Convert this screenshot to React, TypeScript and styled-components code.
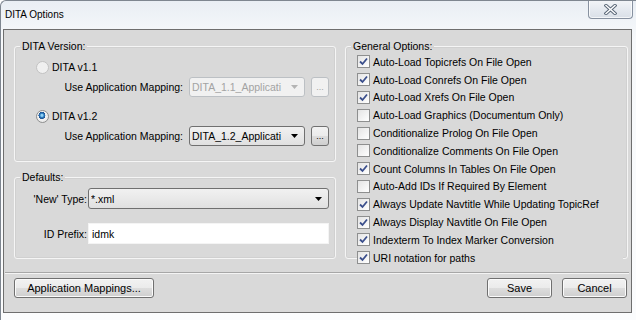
import styled, { createGlobalStyle } from 'styled-components';

const GlobalStyle = createGlobalStyle`
  html, body {
    margin: 0;
    padding: 0;
    background: #ffffff;
  }
  body {
    font-family: "Liberation Sans", Arial, sans-serif;
    font-size: 10.5px;
    color: #000;
  }
`;

const options = [
  { label: 'Auto-Load Topicrefs On File Open', checked: true },
  { label: 'Auto-Load Conrefs On File Open', checked: true },
  { label: 'Auto-Load Xrefs On File Open', checked: true },
  { label: 'Auto-Load Graphics (Documentum Only)', checked: false },
  { label: 'Conditionalize Prolog On File Open', checked: false },
  { label: 'Conditionalize Comments On File Open', checked: false },
  { label: 'Count Columns In Tables On File Open', checked: true },
  { label: 'Auto-Add IDs If Required By Element', checked: false },
  { label: 'Always Update Navtitle While Updating TopicRef', checked: true },
  { label: 'Always Display Navtitle On File Open', checked: true },
  { label: 'Indexterm To Index Marker Conversion', checked: true },
  { label: 'URI notation for paths', checked: true },
];

const Arrow = ({ disabled }: { disabled?: boolean }) => (
  <svg width="7" height="4" viewBox="0 0 7 4">
    <polygon points="0,0 7,0 3.5,4" fill={disabled ? '#b4b4b4' : '#000'} />
  </svg>
);

const CheckMark = () => (
  <svg width="11" height="11" viewBox="0 0 11 11">
    <polyline points="2,5.5 4.5,8 9,2.5" fill="none" stroke="#3b4f8c" strokeWidth="1.8" />
  </svg>
);

const CloseGlyph = () => (
  <svg width="13" height="11" viewBox="0 0 13 11">
    <path d="M2 1.5 L11 9.5 M11 1.5 L2 9.5" stroke="#5d6a7a" strokeWidth="3.4" strokeLinecap="square" />
    <path d="M2 1.5 L11 9.5 M11 1.5 L2 9.5" stroke="#ffffff" strokeWidth="1.4" strokeLinecap="square" />
  </svg>
);

const App = () => {
  return (
    <>
      <GlobalStyle />
      <Window>
        <TitleBar>
          <Title>DITA Options</Title>
          <CloseButton>
            <CloseGlyph />
          </CloseButton>
        </TitleBar>

        <Client>
          <Main>
            <LeftColumn>
              <VersionGroup>
                <Legend>DITA Version:</Legend>
                <VersionBody>
                  <RadioRow>
                    <Radio $disabled />
                    <span>DITA v1.1</span>
                  </RadioRow>
                  <MappingRow>
                    <span>Use Application Mapping:</span>
                    <Combo $disabled $width={116} $height={20}>
                      <ComboText>DITA_1.1_Applicati</ComboText>
                      <Arrow disabled />
                    </Combo>
                    <DotsButton $disabled>...</DotsButton>
                  </MappingRow>
                  <RadioRow $gap={9}>
                    <Radio $checked />
                    <span>DITA v1.2</span>
                  </RadioRow>
                  <MappingRow>
                    <span>Use Application Mapping:</span>
                    <Combo $width={116} $height={20}>
                      <ComboText>DITA_1.2_Applicati</ComboText>
                      <Arrow />
                    </Combo>
                    <DotsButton>...</DotsButton>
                  </MappingRow>
                </VersionBody>
              </VersionGroup>

              <DefaultsGroup>
                <Legend>Defaults:</Legend>
                <FieldGrid>
                  <FieldLabel>'New' Type:</FieldLabel>
                  <Combo $height={21}>
                    <ComboText>*.xml</ComboText>
                    <Arrow />
                  </Combo>
                  <FieldLabel>ID Prefix:</FieldLabel>
                  <TextField>idmk</TextField>
                </FieldGrid>
              </DefaultsGroup>
            </LeftColumn>

            <OptionsGroup>
              <Legend>General Options:</Legend>
              <OptionList>
                {options.map((o) => (
                  <OptionRow key={o.label}>
                    <CheckBox>{o.checked && <CheckMark />}</CheckBox>
                    <span>{o.label}</span>
                  </OptionRow>
                ))}
              </OptionList>
            </OptionsGroup>
          </Main>

          <Separator />

          <Footer>
            <PushButton $width={140}>Application Mappings...</PushButton>
            <Spacer />
            <PushButton $width={65}>Save</PushButton>
            <PushButton $width={65}>Cancel</PushButton>
          </Footer>
        </Client>
      </Window>
    </>
  );
};

export default App;

const Window = styled.div`
  width: 636px;
  height: 320px;
  box-sizing: border-box;
  overflow: hidden;
  background: linear-gradient(180deg, #e9eef4 0%, #f7f9fb 12%, #fbfcfd 100%);
  border-top: 1px solid #7e8690;
  border-left: 1px solid #7e8690;
  border-top-left-radius: 6px;
  display: flex;
  flex-direction: column;
`;

const TitleBar = styled.div`
  height: 28px;
  display: flex;
  justify-content: space-between;
  align-items: flex-start;
  padding-left: 4px;
  padding-right: 3px;
`;

const Title = styled.div`
  margin-top: 8px;
  font-size: 10px;
  line-height: 12px;
  color: #000;
`;

const CloseButton = styled.div`
  width: 45px;
  height: 19px;
  margin-top: -1px;
  box-sizing: border-box;
  border: 1px solid #8791a0;
  border-top: none;
  border-radius: 0 0 4px 4px;
  background: linear-gradient(180deg, #f3f5f8 0%, #e6eaf0 50%, #d9dfe7 100%);
  box-shadow: inset 0 0 0 1px rgba(255, 255, 255, 0.7);
  display: flex;
  align-items: center;
  justify-content: center;
`;

const Client = styled.div`
  height: 284px;
  box-sizing: border-box;
  margin-left: 2px;
  margin-right: 4px;
  border: 1px solid #6e6e6e;
  background: #d9d9d9;
  display: flex;
  flex-direction: column;
`;

const Main = styled.div`
  display: flex;
  gap: 9px;
  padding: 10px 3px 0 10px;
`;

const LeftColumn = styled.div`
  width: 322px;
  display: flex;
  flex-direction: column;
  gap: 9px;
`;

const GroupBox = styled.fieldset`
  margin: 0;
  min-inline-size: 0;
  box-sizing: border-box;
  border: 1px solid #f5f5f5;
  border-radius: 3px;
  box-shadow: inset 0 0 0 1px rgba(0, 0, 0, 0.04);
`;

const VersionGroup = styled(GroupBox)`
  padding: 5px 6px 15px 0;
`;

const VersionBody = styled.div`
  padding-left: 21px;
`;

const DefaultsGroup = styled(GroupBox)`
  padding: 5px 6px 14px 0;
`;

const OptionsGroup = styled(GroupBox)`
  width: 283px;
  padding: 1px 4px 0 0;
`;

const Legend = styled.legend`
  margin-left: 5px;
  padding: 0 2px;
  line-height: 12px;
`;

const RadioRow = styled.div<{ $gap?: number }>`
  height: 20px;
  margin-top: ${(p) => p.$gap || 0}px;
  display: flex;
  align-items: center;
  gap: 3px;
`;

const Radio = styled.span<{ $checked?: boolean; $disabled?: boolean }>`
  width: 13px;
  height: 13px;
  box-sizing: border-box;
  border-radius: 50%;
  border: 1px solid ${(p) => (p.$disabled ? '#c2c2c2' : '#8e8f8f')};
  background: ${(p) =>
    p.$checked
      ? 'radial-gradient(circle at 45% 40%, #8fd0f4 0 1px, #2f7fc1 2px, #1b4f8f 3.4px, #f2f2f2 3.6px, #e3e3e3 100%)'
      : p.$disabled
      ? '#f0f0f0'
      : 'linear-gradient(135deg, #dcdcdc, #ffffff)'};
`;

const MappingRow = styled.div`
  height: 20px;
  display: flex;
  align-items: center;
  justify-content: flex-end;
  gap: 6px;
`;

const Combo = styled.div<{ $disabled?: boolean; $width?: number; $height: number }>`
  width: ${(p) => (p.$width ? `${p.$width}px` : 'auto')};
  height: ${(p) => p.$height}px;
  box-sizing: border-box;
  display: flex;
  align-items: center;
  gap: 4px;
  padding: 0 6px 0 2px;
  border: 1px solid ${(p) => (p.$disabled ? '#bcc0c4' : '#707070')};
  border-radius: 3px;
  color: ${(p) => (p.$disabled ? '#a3a3a3' : '#000')};
  background: ${(p) =>
    p.$disabled ? '#f1f1f1' : 'linear-gradient(180deg, #f1f1f1 0%, #e9e9e9 50%, #e0e0e0 100%)'};
`;

const ComboText = styled.span`
  flex: 1;
  overflow: hidden;
  white-space: nowrap;
`;

const DotsButton = styled.span<{ $disabled?: boolean }>`
  width: 18px;
  height: 20px;
  box-sizing: border-box;
  display: flex;
  align-items: flex-end;
  justify-content: center;
  padding-bottom: 4px;
  font-size: 9px;
  line-height: 9px;
  border: 1px solid ${(p) => (p.$disabled ? '#bcc0c4' : '#707070')};
  border-radius: 3px;
  color: ${(p) => (p.$disabled ? '#a3a3a3' : '#000')};
  background: ${(p) =>
    p.$disabled ? '#f1f1f1' : 'linear-gradient(180deg, #f2f2f2 0%, #ebebeb 50%, #dddddd 51%, #cfcfcf 100%)'};
`;

const FieldGrid = styled.div`
  display: grid;
  grid-template-columns: 72px 1fr;
  column-gap: 1px;
  row-gap: 14px;
  align-items: center;
`;

const FieldLabel = styled.span`
  text-align: right;
`;

const TextField = styled.div`
  height: 21px;
  box-sizing: border-box;
  padding: 0 3px;
  display: flex;
  align-items: center;
  background: #ffffff;
  border: 1px solid #f4f4f4;
`;

const OptionList = styled.div`
  display: flex;
  flex-direction: column;
  padding-left: 11px;
  margin-bottom: -9px;
`;

const OptionRow = styled.div`
  height: 17.8px;
  display: flex;
  align-items: center;
  gap: 3px;
  background: #d9d9d9;
`;

const CheckBox = styled.span`
  width: 13px;
  height: 13px;
  box-sizing: border-box;
  border: 1px solid #8e8f8f;
  background: linear-gradient(135deg, #e4e4e4 0%, #ffffff 100%);
  display: flex;
  align-items: center;
  justify-content: center;
`;

const Separator = styled.div`
  margin: 13px 2px 0 1px;
  height: 0;
  border-top: 1px solid #a7a7a7;
  border-bottom: 1px solid #f4f4f4;
`;

const Footer = styled.div`
  display: flex;
  gap: 10px;
  padding: 4px 4px 0 10px;
`;

const Spacer = styled.div`
  flex: 1;
`;

const PushButton = styled.div<{ $width: number }>`
  width: ${(p) => p.$width}px;
  height: 20px;
  box-sizing: border-box;
  display: flex;
  align-items: center;
  justify-content: center;
  border: 1px solid #707070;
  border-radius: 3px;
  background: linear-gradient(180deg, #f2f2f2 0%, #ebebeb 50%, #dddddd 51%, #cfcfcf 100%);
  box-shadow: inset 0 0 0 1px #fbfbfb;
  font-size: 11px;
`;
